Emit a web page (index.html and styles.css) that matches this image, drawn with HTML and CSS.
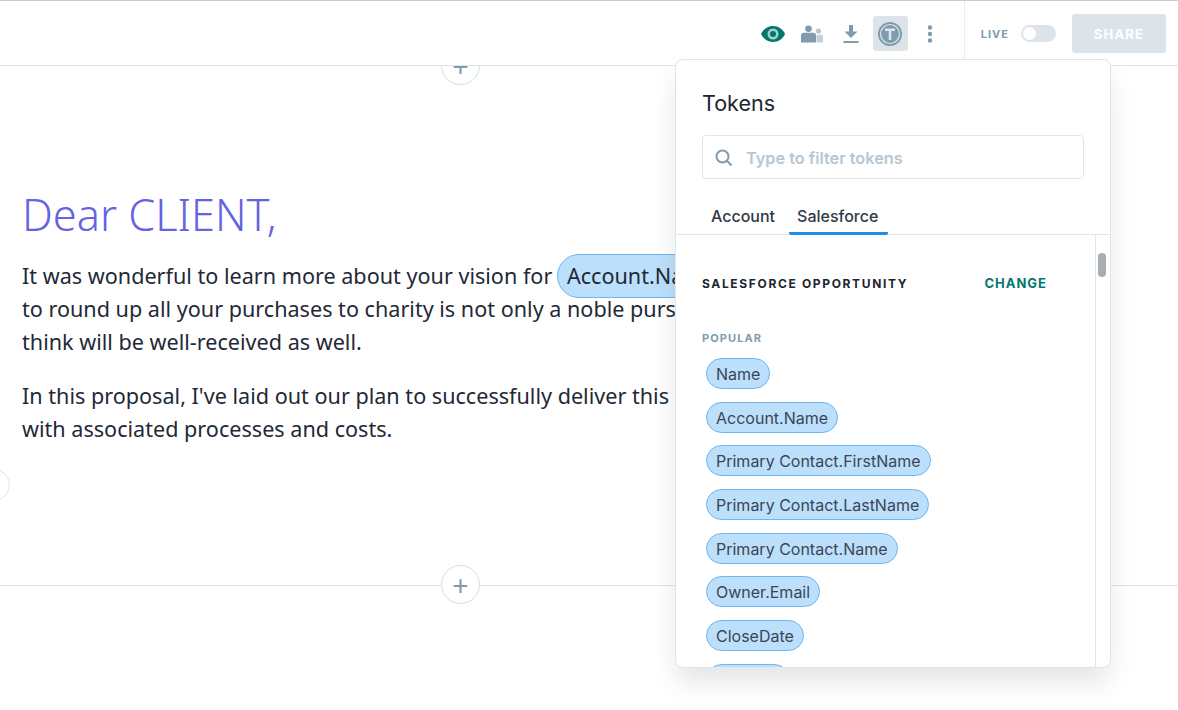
FILE: index.html
```html
<!DOCTYPE html>
<html lang="en">

<head>
    <meta charset="UTF-8">
    <title>Tokens</title>
    <link rel="stylesheet" href="styles.css">
</head>

<body>

    <header class="topbar">
        <div class="tools">
            <span class="tool">
                <svg width="26" height="18" viewBox="0 0 26 18"><path fill="#00786f" d="M13 1C7.500 1 3 4.500 1 9c2 4.500 6.500 8 12 8s10-3.500 12-8c-2-4.500-6.500-8-12-8z"/><circle cx="13" cy="9" r="5.500" fill="#a9cfcc"/><circle cx="13" cy="9" r="3" fill="#00786f"/></svg>
            </span>
            <span class="tool">
                <svg width="22" height="18" viewBox="0 0 22 18"><circle cx="7.500" cy="3.800" r="3.300" fill="#7e9cae"/><path fill="#7e9cae" d="M0 17.500v-7c0-1.700 1-2.700 2.700-2.700h9.600c1.700 0 2.700 1 2.700 2.700v7z"/><circle cx="17.500" cy="6" r="2.600" fill="#b4c6d1"/><rect x="15.500" y="9.800" width="6.500" height="7.700" rx="1" fill="#c3d1da"/></svg>
            </span>
            <span class="tool">
                <svg width="18" height="20" viewBox="0 0 18 20"><path fill="#7e9cae" d="M7 1h4v6.500h4.500L9 14 2.500 7.500H7z"/><rect x="1.500" y="17" width="15" height="2" fill="#7e9cae"/></svg>
            </span>
            <span class="tool tool-active">
                <svg width="28" height="28" viewBox="0 0 28 28"><circle cx="14" cy="14" r="12" fill="#7e9cae"/><circle cx="14" cy="14" r="9.500" fill="none" stroke="#dde4e9" stroke-width="1.200"/><path fill="#dde4e9" d="M9 8.500h10v2.400h-3.700V20h-2.600v-9.100H9z"/></svg>
            </span>
            <span class="tool">
                <svg width="8" height="18" viewBox="0 0 8 18"><circle cx="5" cy="2.500" r="2.200" fill="#7e9cae"/><circle cx="5" cy="9" r="2.200" fill="#7e9cae"/><circle cx="5" cy="15.500" r="2.200" fill="#7e9cae"/></svg>
            </span>
        </div>
        <div class="publish">
            <span class="live-label">LIVE</span>
            <span class="toggle"><span class="knob"></span></span>
            <button class="share">SHARE</button>
        </div>
    </header>

    <section class="page-block">
        <span class="add-btn add-top">+</span>
        <span class="side-btn"></span>
        <h1>Dear CLIENT,</h1>
        <p>It was wonderful to learn more about your vision for <span class="doc-token">Account.Name</span><br>to round up all your purchases to charity is not only a noble pursuit<br>think will be well-received as well.</p>
        <p>In this proposal, I've laid out our plan to successfully deliver this project,<br>with associated processes and costs.</p>
        <span class="add-btn add-bottom">+</span>
    </section>

    <aside class="tokens-panel">
        <div class="panel-head">
            <h2>Tokens</h2>
            <div class="search">
                <svg width="18" height="18" viewBox="0 0 18 18"><circle cx="7.500" cy="7.500" r="6" fill="none" stroke="#7e9cae" stroke-width="2"/><path d="M12 12l4.500 4.500" stroke="#7e9cae" stroke-width="2"/></svg>
                <span class="placeholder">Type to filter tokens</span>
            </div>
            <div class="tabs">
                <span class="tab">Account</span>
                <span class="tab tab-active">Salesforce</span>
            </div>
        </div>
        <div class="panel-body">
            <div class="token-list">
                <div class="opportunity">
                    <span class="opp-title">SALESFORCE OPPORTUNITY</span>
                    <span class="change">CHANGE</span>
                </div>
                <div class="group-label">POPULAR</div>
                <ul>
                    <li><span class="token">Name</span></li>
                    <li><span class="token">Account.Name</span></li>
                    <li><span class="token">Primary Contact.FirstName</span></li>
                    <li><span class="token">Primary Contact.LastName</span></li>
                    <li><span class="token">Primary Contact.Name</span></li>
                    <li><span class="token">Owner.Email</span></li>
                    <li><span class="token">CloseDate</span></li>
                    <li><span class="token">Quantity</span></li>
                </ul>
            </div>
            <div class="scroll-track"><span class="scroll-thumb"></span></div>
        </div>
    </aside>

</body>

</html>
```

FILE: styles.css
```css
html,
body {
    height: 100%;
}

body {
    margin: 0;
    overflow: hidden;
    position: relative;
    background-color: #fff;
    font-family: 'Inter', 'Liberation Sans', sans-serif;
    color: #2f3a48;
}

.topbar {
    display: flex;
    justify-content: flex-end;
    height: 64px;
    border-top: 1px solid #c8cdcf;
    border-bottom: 1px solid #dfe6ea;
    box-sizing: content-box;
}

.tools {
    display: flex;
    align-items: center;
    gap: 4px;
    padding: 1px 17px 0 0;
    border-right: 1px solid #e8edf0;
}

.tool {
    display: flex;
    align-items: center;
    justify-content: center;
    width: 35px;
    height: 35px;
    border-radius: 3px;
}

.tool-active {
    background-color: #dde4e9;
}

.publish {
    display: flex;
    align-items: center;
    padding: 1px 12px 0 16px;
}

.live-label {
    font-size: 11px;
    font-weight: 700;
    letter-spacing: 1px;
    color: #7e9cae;
    margin-right: 12px;
}

.toggle {
    display: block;
    width: 35px;
    height: 17px;
    border-radius: 9px;
    background-color: #dde4e9;
    position: relative;
    margin-right: 16px;
}

.knob {
    position: absolute;
    left: 2px;
    top: 2px;
    width: 13px;
    height: 13px;
    border-radius: 50%;
    background-color: #fff;
}

.share {
    width: 94px;
    height: 39px;
    border: 0;
    border-radius: 3px;
    background-color: #dde4e9;
    color: #fff;
    font-family: inherit;
    font-size: 13px;
    font-weight: 700;
    letter-spacing: 1.200px;
}

.page-block {
    position: relative;
    height: 520px;
    border-bottom: 1px solid #dfe6ea;
    padding: 123px 0 0 22px;
    box-sizing: border-box;
    font-family: 'Noto Sans', 'Open Sans', sans-serif;
    color: #1f2937;
}

h1 {
    margin: 0 0 18px;
    font-size: 43.300px;
    line-height: 52px;
    font-weight: 300;
    color: #6563e0;
}

/* text runs on under the panel, so stop it at the panel edge */
.page-block p {
    width: 654px;
    margin: 0 0 21px;
    font-size: 21.600px;
    line-height: 33px;
    white-space: nowrap;
    overflow-x: clip;
}

.doc-token {
    display: inline-block;
    line-height: 30px;
    padding: 6px 9px;
    margin: -7px 0 -7px -1px;
    border: 1px solid #6db6f0;
    border-radius: 22px;
    background-color: #bcdffb;
}

.add-btn {
    position: absolute;
    left: 441px;
    width: 37px;
    height: 37px;
    border: 1px solid #d3dee3;
    border-radius: 50%;
    background-color: #fff;
    color: #7e9cae;
    font-family: 'Liberation Sans', sans-serif;
    font-size: 28px;
    line-height: 39px;
    text-align: center;
}

.add-top {
    top: -20px;
    clip-path: inset(20px -2px -2px -2px);
}

.add-bottom {
    bottom: -19px;
}

.side-btn {
    position: absolute;
    left: -22px;
    top: 403px;
    width: 30px;
    height: 30px;
    border: 1px solid #dfe6ea;
    border-radius: 50%;
}

.tokens-panel {
    position: absolute;
    left: 675px;
    top: 59px;
    width: 436px;
    height: 609px;
    box-sizing: border-box;
    display: flex;
    flex-direction: column;
    background-color: #fff;
    border: 1px solid #dfe6ea;
    border-radius: 8px;
    box-shadow: 0 16px 26px -2px rgba(60, 70, 80, 0.14);
    overflow: hidden;
}

.panel-head {
    padding: 29px 26px 0;
    border-bottom: 1px solid #dfe6ea;
}

h2 {
    margin: 0;
    font-size: 21.500px;
    line-height: 28px;
    font-weight: 400;
    color: #1c2530;
}

.search {
    display: flex;
    align-items: center;
    gap: 13px;
    height: 44px;
    margin-top: 18px;
    padding: 1px 0 0 12px;
    border: 1px solid #dfe6ea;
    border-radius: 4px;
    box-sizing: border-box;
}

.placeholder {
    font-size: 16.300px;
    font-weight: 600;
    color: #b6c7d2;
}

.tabs {
    display: flex;
    gap: 6px;
    margin: 25px 0 0 1px;
}

.tab {
    padding: 0 8px 5px;
    font-size: 16px;
    line-height: 25px;
    font-weight: 500;
}

.tab-active {
    margin-bottom: -1px;
    padding: 0 10px 3px 8px;
    border-bottom: 3px solid #1e8fe8;
    border-radius: 2px;
}

.panel-body {
    flex: 1;
    display: flex;
    min-height: 0;
}

.token-list {
    flex: 1;
    padding: 41px 0 0 26px;
    overflow: hidden;
}

.opportunity {
    display: flex;
    justify-content: space-between;
    padding-right: 48px;
    font-size: 12px;
    line-height: 16px;
    font-weight: 700;
    letter-spacing: 1.650px;
    color: #1c2530;
}

.change {
    color: #00786f;
    font-size: 13px;
    line-height: 15px;
    letter-spacing: 1px;
}

.group-label {
    margin-top: 39px;
    font-size: 11px;
    line-height: 14px;
    font-weight: 700;
    letter-spacing: 1.100px;
    color: #7e9cae;
}

ul {
    list-style-type: none;
    margin: 13px 0 0 4px;
    padding: 0;
}

li {
    height: 31px;
    margin-bottom: 12.700px;
}

.token {
    display: inline-block;
    height: 31px;
    line-height: 30px;
    padding: 0 9px;
    box-sizing: border-box;
    border: 1px solid #6db6f0;
    border-radius: 16px;
    background-color: #bcdffb;
    font-size: 16px;
    color: #3a4656;
}

.scroll-track {
    width: 14px;
    border-left: 1px solid #dfe6ea;
    position: relative;
}

.scroll-thumb {
    position: absolute;
    left: 2px;
    top: 18px;
    width: 8px;
    height: 24px;
    border-radius: 4px;
    background-color: #a9adb0;
}
```
